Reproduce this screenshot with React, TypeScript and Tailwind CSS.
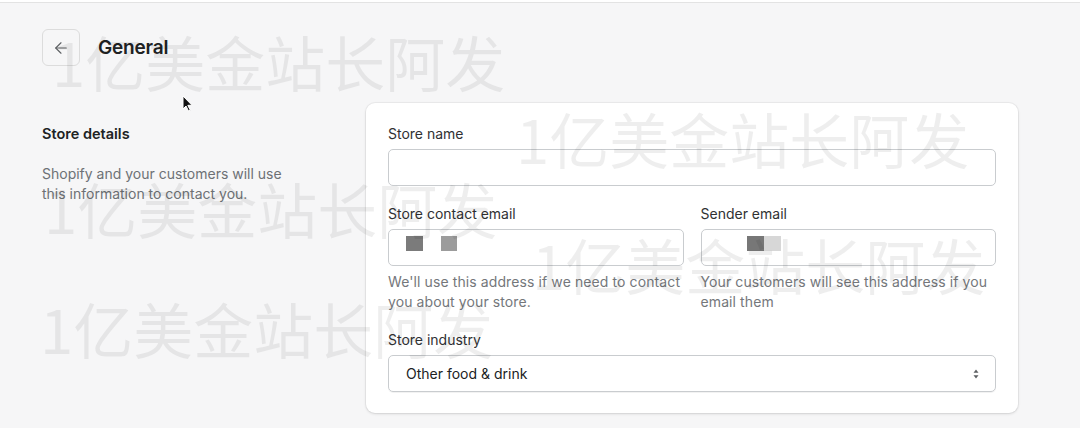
import { ArrowLeft } from "lucide-react";

const WATERMARKS = [
  { top: 31, left: 52 },
  { top: 108, left: 516 },
  { top: 178, left: 44 },
  { top: 234, left: 532 },
  { top: 298, left: 40 },
];

function Field({ label, children, help }: { label: string; children: React.ReactNode; help?: string }) {
  return (
    <div className="flex flex-col">
      <label className="text-[14px] leading-5 text-[#303133] mb-[5px]">{label}</label>
      {children}
      {help && <p className="mt-[6px] text-[14px] leading-5 text-[#74777b] tracking-[0.1px]">{help}</p>}
    </div>
  );
}

export default function App() {
  return (
    <div
      className="relative w-full h-[428px] overflow-hidden bg-[#f6f6f7]"
      style={{ fontFamily: "Inter, 'Liberation Sans', sans-serif" }}
    >
      <div className="h-[3px] bg-white border-b border-[#e3e3e3]" />

      <div className="pl-[42px] pr-[62px]">
        {/* header */}
        <div className="flex items-center mt-[26px] h-[37px]">
          <button className="w-[38px] h-[37px] rounded-md border border-[#dcdcdc] flex items-center justify-center text-[#5c5f62]">
            <ArrowLeft size={18} strokeWidth={1.5} />
          </button>
          <h1 className="ml-[18px] text-[19px] font-semibold text-[#202223] tracking-[-0.2px] pt-[2px]">General</h1>
        </div>

        {/* store details */}
        <div className="flex mt-[37px] gap-[76px]">
          <div className="w-[248px] pt-[21px]">
            <h2 className="text-[14.5px] font-semibold leading-5 text-[#202223]">Store details</h2>
            <p className="mt-[20px] text-[14px] leading-5 text-[#6d7175]">
              Shopify and your customers will use this information to contact you.
            </p>
          </div>

          <div className="flex-1 bg-white rounded-[9px] shadow-[0_0_0_1px_rgba(0,0,0,0.04),0_1px_3px_rgba(0,0,0,0.12)] px-[22px] pt-[21px] pb-[21px]">
            <Field label="Store name">
              <input className="h-[37px] rounded-[5px] border border-[#c9cccf] px-3 outline-none" />
            </Field>

            <div className="grid grid-cols-2 gap-[17px] mt-[18px]">
              <Field label="Store contact email" help="We'll use this address if we need to contact you about your store.">
                <div className="h-[37px] rounded-[5px] border border-[#c9cccf] flex items-start pt-[6px] pl-[17px]">
                  <span className="w-[17px] h-[15px] bg-[#7b7b7b]" />
                  <span className="ml-[18px] w-[16px] h-[15px] bg-[#9c9c9c]" />
                </div>
              </Field>
              <Field label="Sender email" help="Your customers will see this address if you email them">
                <div className="h-[37px] rounded-[5px] border border-[#c9cccf] flex items-start pt-[6px] pl-[45px]">
                  <span className="w-[17px] h-[15px] bg-[#777777]" />
                  <span className="w-[17px] h-[15px] bg-[#d7d7d7]" />
                </div>
              </Field>
            </div>

            <div className="mt-[18px]">
              <Field label="Store industry">
                <div className="h-[37px] rounded-[5px] border border-[#c9cccf] flex items-center justify-between pl-[17px] pr-[16px] shadow-[0_1px_0_rgba(0,0,0,0.05)]">
                  <span className="text-[14px] text-[#202223]">Other food &amp; drink</span>
                  <svg width="6" height="10" viewBox="0 0 6 10" fill="#5c5f62">
                    <path d="M3 0.5 L5.5 3.8 H0.5 Z" />
                    <path d="M3 9.5 L5.5 6.2 H0.5 Z" />
                  </svg>
                </div>
              </Field>
            </div>
          </div>
        </div>
      </div>

      {/* mouse cursor */}
      <svg className="absolute left-[182px] top-[95px]" width="11" height="17" viewBox="0 0 11 17">
        <path d="M1 1 L1 14 L4 11 L6.5 16 L8.3 15.2 L5.8 10.3 L10 10.3 Z" fill="#111" stroke="#fff" strokeWidth="1" />
      </svg>

      {/* watermark */}
      {WATERMARKS.map((w, i) => (
        <span
          key={i}
          className="absolute pointer-events-none select-none text-[60px] leading-none text-black/[0.065] whitespace-nowrap"
          style={{ top: w.top, left: w.left, fontFamily: "'Noto Sans CJK SC', sans-serif" }}
        >
          1亿美金站长阿发
        </span>
      ))}
    </div>
  );
}
